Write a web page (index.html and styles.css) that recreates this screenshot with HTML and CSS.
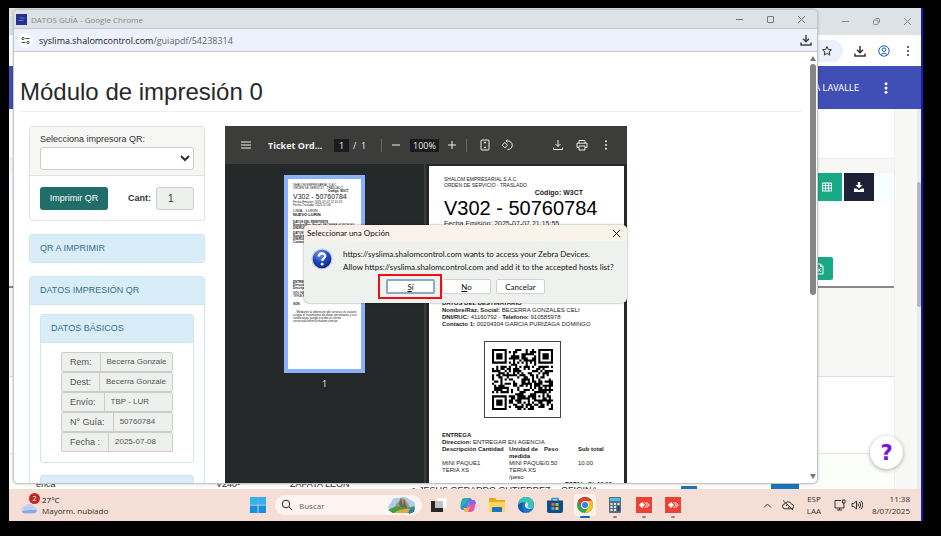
FILE: index.html
```html
<!DOCTYPE html>
<html lang="es">
<head>
<meta charset="utf-8">
<title>DATOS GUÍA</title>
<link rel="stylesheet" href="styles.css">
</head>
<body>
<div class="screen">
  <main class="desktop">
    <section class="browser">
      <div class="browser-title">
        <svg class="i9" viewBox="0 0 9 9"><path d="M1 4.5h7"/></svg>
        <svg class="i9" viewBox="0 0 9 9"><rect x="1.500" y="3" width="4.500" height="4.500" rx="1"/><path d="M3.500 1.500h3q1 0 1 1v3"/></svg>
        <svg class="i9" viewBox="0 0 9 9"><path d="M1 1l7 7M8 1l-7 7"/></svg>
      </div>
      <div class="browser-tools">
        <span class="star-pill"><svg class="i12" viewBox="0 0 12 12"><path d="M6 1.500l1.300 3 3.200.3-2.400 2.100.7 3.200L6 8.400l-2.800 1.700.7-3.200L1.500 4.800l3.200-.3z"/></svg></span>
        <svg class="i12" viewBox="0 0 12 12"><path class="thick" d="M6 1v6.500M3 4.800l3 3 3-3M1 8.500V11h10V8.500"/></svg>
        <svg class="i12 user" viewBox="0 0 12 12"><circle cx="6" cy="6" r="5.200"/><circle cx="6" cy="4.700" r="1.800"/><path d="M2.600 9.500q3.400-3 6.800 0"/></svg>
        <svg class="i12" viewBox="0 0 12 12"><g class="solid"><circle cx="6" cy="2" r="1"/><circle cx="6" cy="6" r="1"/><circle cx="6" cy="10" r="1"/></g></svg>
      </div>
      <div class="app-header">
        <span>A LAVALLE</span>
        <svg class="i12" viewBox="0 0 12 12"><g class="solid"><circle cx="6" cy="1.800" r="1.500"/><circle cx="6" cy="6" r="1.500"/><circle cx="6" cy="10.200" r="1.500"/></g></svg>
      </div>
      <div class="app-page">
        <div class="app-content">
          <div class="card-top"></div>
          <div class="card-tools">
            <button class="tool green" aria-label="Tabla"><svg class="i12" viewBox="0 0 12 12"><path d="M1.500 2h9v8h-9zM1.500 4.500h9M1.500 7.200h9M4.500 2v8M7.500 2v8"/></svg></button>
            <button class="tool dark" aria-label="Descargar"><svg class="i12" viewBox="0 0 12 12"><path class="fill" d="M4.800 1h2.400v3h2.300L6 7.500 2.500 4h2.300zM1 7.500h2.500L6 9.300l2.500-1.800H11V11H1z"/></svg></button>
          </div>
          <div class="card-excel"><button class="excel" aria-label="Excel"><svg class="i12" viewBox="0 0 12 12"><path d="M2.500 1h5L10 3.500V11H2.500zM7.500 1v2.500H10M4.500 5l3.500 4M8 5L4.500 9"/></svg></button></div>
          <div class="row-band"></div>
          <div class="row-white"></div>
          <div class="row-last">
            <span>erica</span><span>V240-</span><span>ZAPATA LEON</span><span class="low">● JESUS GERARDO GUTIERREZ</span><span class="low">OFICINA</span><i class="chip thin"></i><i class="chip"></i>
          </div>
        </div>
        <div class="app-scroll"><div class="app-thumb"></div></div>
      </div>
      <button class="help">?</button>
    </section>

    <section class="popup">
      <header class="popup-title">
        <svg class="fav" viewBox="0 0 11 11"><rect width="11" height="11" fill="#28318f" stroke="none"/><path d="M3.500 4h5M2.500 6.500h5" stroke="#5f78cf"/></svg>
        <span>DATOS GUÍA - Google Chrome</span>
        <div class="win-buttons">
          <svg class="i9" viewBox="0 0 9 9"><path d="M1 4.500h7"/></svg>
          <svg class="i9" viewBox="0 0 9 9"><rect x="1.500" y="1.500" width="6" height="6" rx=".5"/></svg>
          <svg class="i9" viewBox="0 0 9 9"><path d="M1 1l7 7M8 1l-7 7"/></svg>
        </div>
      </header>
      <div class="popup-url">
        <span class="tune"><svg class="i9" viewBox="0 0 9 9"><circle cx="2" cy="2.500" r="1.200"/><path d="M4.500 2.500h4M.5 6.500h4"/><circle cx="7" cy="6.500" r="1.200"/></svg></span>
        <span class="address"><b>syslima.shalomcontrol.com</b>/guiapdf/54238314</span>
        <svg class="i12" viewBox="0 0 12 12"><path class="thick" d="M6 1v6.500M3 4.800l3 3 3-3M1 8.500V11h10V8.500"/></svg>
      </div>
      <div class="popup-view">
        <div class="popup-page">
          <h1>Módulo de impresión 0</h1>
          <div class="columns">
            <form class="left">
              <div class="panel plain">
                <div class="panel-head">
                  <label for="printer">Selecciona impresora QR:</label>
                  <select id="printer"><option></option></select>
                </div>
                <div class="panel-print">
                  <button type="button" class="print">Imprimir QR</button>
                  <label for="cant">Cant:</label>
                  <input id="cant" value="1">
                </div>
              </div>
              <div class="panel info"><h2>QR A IMPRIMIR</h2></div>
              <div class="panel info">
                <h2>DATOS IMPRESIÓN QR</h2>
                <div class="panel-body">
                  <div class="panel info">
                    <h2>DATOS BÁSICOS</h2>
                    <div class="fields">
                      <div class="field"><label for="f1">Rem:</label><input id="f1" value="Becerra Gonzales"></div>
                      <div class="field"><label for="f2">Dest:</label><input id="f2" value="Becerra Gonzales"></div>
                      <div class="field"><label for="f3">Envío:</label><input id="f3" value="TBP - LUR"></div>
                      <div class="field"><label for="f4">N° Guía:</label><input id="f4" value="50760784"></div>
                      <div class="field"><label for="f5">Fecha :</label><input id="f5" value="2025-07-08"></div>
                    </div>
                  </div>
                  <div class="panel info"><h2></h2></div>
                </div>
              </div>
            </form>

            <div class="viewer">
              <div class="pdf-bar">
                <svg class="i12" viewBox="0 0 12 12"><path d="M1 3h10M1 6h10M1 9h10"/></svg>
                <strong>Ticket Ord...</strong>
                <span class="pdf-num">1</span><span class="pdf-of">/ &nbsp;1</span>
                <i class="sep"></i>
                <svg class="i12" viewBox="0 0 12 12"><path d="M2 6h8"/></svg>
                <span class="pdf-num zoom">100%</span>
                <svg class="i12" viewBox="0 0 12 12"><path d="M2 6h8M6 2v8"/></svg>
                <i class="sep"></i>
                <svg class="i12 fit" viewBox="0 0 12 12"><rect x="2" y="1" width="8" height="10" rx="1"/><path d="M6 3v1.500M6 9V7.500M5 4l1-1.200L7 4M5 8l1 1.200L7 8"/></svg>
                <svg class="i12 rot" viewBox="0 0 12 12"><path d="M3.800 3.500L6.500 6.200 3.800 9 1.100 6.200zM5 2h2a4.200 4.200 0 010 8.500H6.500M6.500.5L5 2l1.500 1.500"/></svg>
                <div class="pdf-right">
                  <svg class="i12" viewBox="0 0 12 12"><path d="M6 1v6.500M3.500 5L6 7.500 8.500 5M1.500 8.500v2h9v-2"/></svg>
                  <svg class="i12" viewBox="0 0 12 12"><path d="M3 4V1.500h6V4M3 8.500H1V4.200h10v4.300H9M3 7h6v4H3z"/></svg>
                  <svg class="i12" viewBox="0 0 12 12"><g class="solid"><circle cx="6" cy="2.300" r="1"/><circle cx="6" cy="6" r="1"/><circle cx="6" cy="9.700" r="1"/></g></svg>
                </div>
              </div>
              <div class="pdf-main">
                <div class="thumbs">
                  <div class="thumb">
                    <p>SHALOM EMPRESARIAL S.A.C<br>ORDEN DE SERVICIO - TRASLADO</p>
                    <p class="t-code"><b>Código: W3CT</b></p>
                    <p class="t-num">V302 - 50760784</p>
                    <p>Fecha Emisión: 2025-07-07 21:15:55<br>Fecha Traslado: 2025-07-08</p>
                    <p class="t-place">LIMA - LURIN<br><b>NUEVO LURIN</b></p>
                    <p class="t-sender"><b>DATOS DEL REMITENTE<br>Nombre/Raz. Social:</b> BECERRA GONZALES<br><b>DNI/RUC:</b> 41160792</p>
                    <p class="t-dest"><b>DATOS<br>Nombre<br>DNI/RUC<br>Contact</b></p>
                    <p class="t-ent"><b>ENTREGA</b><br><b>Direccion:</b><br><b>Descripción</b></p>
                    <p>MINI PAQUE<br>TERIA XS</p>
                    <p class="t-pay"><b>SON:</b></p>
                    <p class="t-terms">&nbsp; - Mediante la obtención del servicio, el usuario<br>acepta el tratamiento de datos personales y sus<br>condiciones puede escribir al correo<br>servicioalcliente@shalom.com.pe</p>
                  </div>
                  <span>1</span>
                </div>
                <article class="sheet">
                  <p class="s-org">SHALOM EMPRESARIAL S.A.C<br>ORDEN DE SERVICIO - TRASLADO</p>
                  <p class="s-code">Código: W3CT</p>
                  <p class="s-num">V302 - 50760784</p>
                  <p class="s-date">Fecha Emisión: 2025-07-07 21:15:55</p>
                  <div class="s-dest"><b>DATOS DEL DESTINATARIO</b><br><b>Nombre/Raz. Social:</b> BECERRA GONZALES CELI<br><b>DNI/RUC:</b> 41160792 - <b>Telefono:</b> 910585978<br><b>Contacto 1:</b> 00204304 GARCIA PURIZAGA DOMINGO</div>
                  <div class="qr"><svg id="qr" viewBox="0 0 29 29"></svg></div>
                  <div class="s-ent"><b>ENTREGA</b><br><b>Direccion:</b> ENTREGAR EN AGENCIA</div>
                  <table>
                    <tr><th>Descripción Cantidad</th><th>Unidad de medida</th><th>Peso</th><th>Sub total</th></tr>
                    <tr><td>MINI PAQUE1<br>TERIA XS</td><td>MINI PAQUE<br>TERIA XS<br>/peso</td><td>/0.50</td><td>10.00</td></tr>
                  </table>
                  <p class="s-total">TOTAL: S/. 10.00</p>
                </article>
              </div>
            </div>
          </div>
        </div>
        <div class="scroll"><i class="up"></i><div class="scroll-thumb"></div><i class="down"></i></div>
      </div>
    </section>

    <section class="dialog" role="dialog" aria-label="Seleccionar una Opción">
      <header><span>Seleccionar una Opción</span><svg class="i9" viewBox="0 0 9 9"><path d="M1 1l7 7M8 1l-7 7"/></svg></header>
      <div class="dialog-text">
        <svg class="question" viewBox="0 0 22 22"><defs><radialGradient id="ball" cx=".4" cy=".25" r=".8"><stop offset="0" stop-color="#7b9cf0"/><stop offset=".5" stop-color="#2549c4"/><stop offset="1" stop-color="#0c1f78"/></radialGradient></defs><circle cx="11" cy="11" r="10.500" fill="#c9cfd6"/><circle cx="11" cy="11" r="9.300" fill="url(#ball)"/><path d="M7.800 8.500c0-4 6.400-4 6.400-.4 0 2.300-3 2.400-3 5" fill="none" stroke="#fff" stroke-width="2.200"/><circle cx="11.200" cy="16.200" r="1.400" fill="#fff"/></svg>
        <p>https://syslima.shalomcontrol.com wants to access your Zebra Devices.<br>Allow https://syslima.shalomcontrol.com and add it to the accepted hosts list?</p>
      </div>
      <div class="dialog-buttons">
        <div class="mark"><button class="yes"><u>S</u>í</button></div>
        <button><u>N</u>o</button>
        <button>Cancelar</button>
      </div>
    </section>
  </main>

  <footer class="taskbar">
    <div class="weather">
      <div class="cloud"><svg viewBox="0 0 18 12"><path d="M4 11.500a3.500 3.500 0 01.3-7A5 5 0 0113.500 5a3.300 3.300 0 01.8 6.500z" fill="#b9cff5"/><path d="M1 9.500q8-2 16-1-.6 3-3 3H4q-2.500 0-3-2z" fill="#86a8e8"/></svg><span class="badge">2</span></div>
      <p><b>27°C</b><br>Mayorm. nublado</p>
    </div>
    <div class="apps">
      <svg class="app" viewBox="0 0 16 16"><path d="M0 0h7.600v7.600H0zM8.400 0H16v7.600H8.400zM0 8.400h7.600V16H0zM8.400 8.400H16V16H8.400z" fill="#1590e0"/><path d="M0 0h7.600v7.600H0zM8.400 0H16v7.600H8.400z" fill="#35b0ee"/></svg>
      <label class="search">
        <svg class="i12" viewBox="0 0 12 12"><circle cx="5" cy="5" r="3.800"/><path d="M8 8l3.200 3.200"/></svg>
        <input placeholder="Buscar" aria-label="Buscar">
        <svg class="scene" viewBox="0 0 30 18"><path d="M3 15Q-1 10 4 7 5 1 12 2q7-3 11 2 6 1 5 8-1 5-6 5H6z" fill="#a9cdf2"/><path d="M6 13l5-7 3-4 4 1 3 5 3 5z" fill="#a5957c"/><path d="M12 8l2-6 2 8 1-7 3 9-5 2z" fill="#6f6553"/><path d="M1 14q8-5 14-3t12-1q1 6-4 7H6z" fill="#4c9a3c"/><path d="M7 17q7-5 18-4l-5 4z" fill="#d9ac52"/><path d="M22 14l6-3-1 5-5 2z" fill="#2f78b8"/></svg>
      </label>
      <svg class="app" viewBox="0 0 16 16"><rect x="6" y="1" width="10" height="10" fill="#fff"/><rect y="4" width="12" height="11" fill="#262626"/><rect x="4" y="4" width="8" height="7" fill="#c3c3c3"/></svg>
      <svg class="app" viewBox="0 0 16 16"><path d="M5 1h5q1.500 0 2 2l.5 2H9L7 11q-.7 2-2.500 2H3Q0 13 .5 9l1-5Q2.500 1 5 1z" fill="#2b8fe8"/><path d="M1.500 4Q2.500 1 5 1h3L5.500 7 .6 9z" fill="#23b7a0"/><path d="M11 3h2q3 0 2.500 4l-1 5q-1 3-3.500 3H6q-1.500 0-2-2l-.5-2H7l2-6q.7-2 2-2z" fill="#e15bb2"/><path d="M3.500 11H7l3-1-2 5H6q-1.500 0-2-2z" fill="#f6b636"/><path d="M11 3h2q3 0 2.500 4l-5 1L9 5z" fill="#8c62e8"/></svg>
      <svg class="app" viewBox="0 0 16 16"><path d="M0 2q0-1 1-1h5l2 2h7q1 0 1 1v10H0z" fill="#e9a722"/><path d="M0 5h16v9q0 1-1 1H1q-1 0-1-1z" fill="#ffd45a"/><path d="M3 11q0-1 1-1h8q1 0 1 1v4H3z" fill="#1776c4"/></svg>
      <svg class="app" viewBox="0 0 16 16"><circle cx="8" cy="8" r="8" fill="#1677cf"/><path d="M0 8a8 8 0 0116 0q0 3.500-4 3.500-3 0-2.300-2Q10 5.500 6 5.500 2 5.300 0 8z" fill="#37c5b5"/><path d="M9 5q1 1 1 3-1.500 3 3 3.500l2.500-1.500Q14 12.500 11 12 6 11 7 7z" fill="#f6dfd6"/><path d="M0 8q2-3 6-2.500Q2 9 6.500 15.800 0 14.500 0 8z" fill="#1657a8"/></svg>
      <svg class="app" viewBox="0 0 16 16"><path d="M5 4V1.500h6V4" fill="none" stroke="#1a9be0" stroke-width="1.500"/><path d="M0 3.500h16V14q0 2-2 2H2q-2 0-2-2z" fill="#134b88"/><path d="M4.500 6h3v3h-3z" fill="#f05a2a"/><path d="M8.500 6h3v3h-3z" fill="#8cc53f"/><path d="M4.500 10h3v3h-3z" fill="#32a9e8"/><path d="M8.500 10h3v3h-3z" fill="#fdb92c"/></svg>
      <span class="running active"><svg class="app" viewBox="0 0 16 16"><circle cx="8" cy="8" r="8" fill="#34a350"/><path d="M1.100 4A8 8 0 0114.900 4H8a4 4 0 00-3.500 6z" fill="#e33b2e"/><path d="M14.900 4A8 8 0 018 16l3.500-6A4 4 0 008 4z" fill="#fbc116"/><circle cx="8" cy="8" r="3.900" fill="#fff"/><circle cx="8" cy="8" r="3" fill="#3b7de8"/></svg></span>
      <span class="running"><svg class="app" viewBox="0 0 16 16"><rect x="2" width="12" height="16" rx="1" fill="#5e6c7b"/><path d="M3 1h10v3H3z" fill="#42c3ee"/><path d="M3.500 6h2v2h-2zM7 6h2v2H7zM10.500 6h2v2h-2zM3.500 9h2v2h-2zM7 9h2v2H7zM3.500 12h2v2h-2zM7 12h2v2H7z" fill="#e4e9ee"/><path d="M10.500 9h2v5h-2z" fill="#173b78"/></svg></span>
      <span class="running"><svg class="app" viewBox="0 0 16 16"><rect width="16" height="16" fill="#ee4136"/><path d="M6 5l3 3-3 3-3-3z" fill="#fff"/><path d="M8.500 5.200L11.300 8l-2.800 2.800M10.500 5.200L13.300 8l-2.800 2.800" fill="none" stroke="#fff"/></svg></span>
      <span class="running"><svg class="app" viewBox="0 0 16 16"><rect width="16" height="16" fill="#ee4136"/><path d="M6 5l3 3-3 3-3-3z" fill="#fff"/><path d="M8.500 5.200L11.300 8l-2.800 2.800M10.500 5.200L13.300 8l-2.800 2.800" fill="none" stroke="#fff"/></svg></span>
    </div>
    <div class="tray">
      <svg class="i9" viewBox="0 0 9 9"><path d="M1 6.500L4.500 3 8 6.500"/></svg>
      <svg class="i12" viewBox="0 0 12 12"><path d="M3 9.800a2.500 2.500 0 010-5 3.500 3.500 0 016.500.4 2.300 2.300 0 01-.3 4.600zM1 1.500l10 9.500M4 7l2-2M6 9l2-2"/></svg>
      <span class="lang">ESP<br>LAA</span>
      <svg class="i12" viewBox="0 0 12 12"><path d="M7 1.500H1v7.500h9V6M3 11h5M5.500 9v2M8.500 1h2.500v3H8.500zM9.800 4v2"/></svg>
      <svg class="i12" viewBox="0 0 12 12"><path d="M1 4.500h1.800L5.500 2v8L2.800 7.500H1zM7 4.500q1.200 1.500 0 3M8.500 3q2.400 3 0 6M10 1.800q3.600 4.200 0 8.400"/></svg>
      <span class="clock">11:38<br>8/07/2025</span>
    </div>
  </footer>
</div>
<script src="qr.js"></script>
</body>
</html>
```
FILE: styles.css
```css
* { box-sizing: border-box; }
body { margin: 0; background: #000; font-family: "Open Sans", "Noto Sans", sans-serif; font-size: 8px; color: #333; }
h1, h2, p { margin: 0; font-weight: 400; }
button, input, select { font: inherit; color: inherit; margin: 0; padding: 0; border: 0; min-width: 0; }
svg { display: block; flex: none; fill: none; stroke: currentColor; }
.i9 { width: 9px; height: 9px; }
.i12 { width: 12px; height: 12px; }
.thick { stroke-width: 1.5px; }
.solid, .fill { fill: currentColor; stroke: none; }
.app, .cloud svg, .scene, .question { stroke: none; }

.screen { display: flex; flex-direction: column; height: 100vh; border: solid #000; border-width: 8px 18px 15px 9px; }
.desktop { position: relative; flex: 1; min-height: 0; overflow: hidden; }

/* Browser behind the popup */
.browser { display: flex; flex-direction: column; height: 100%; background: #fff; border-right: 2px solid #1a15b5; }
.browser-title { display: flex; justify-content: flex-end; align-items: center; gap: 22px; height: 27px; padding-right: 9px; background: #dce2e5; color: #888; }
.browser-tools { display: flex; justify-content: flex-end; align-items: center; gap: 12px; height: 31px; padding-right: 7px; }
.star-pill { display: flex; justify-content: flex-end; width: 40px; padding: 5px 10px; margin-right: -1px; border-radius: 11px; background: #eaf0fc; }
.user { color: #1a5fc0; }
.app-header { display: flex; justify-content: flex-end; align-items: center; gap: 21px; height: 43px; padding-right: 29px; background: #3f4fb5; color: #fff; font-size: 9px; font-family: Roboto, sans-serif; }
.app-page { display: flex; flex: 1; min-height: 0; background: #f7f8f5; }
.app-content { display: flex; flex-direction: column; flex: 1; margin-right: 22px; min-width: 0; border-right: 1px solid #eef0f0; }
.card-top { height: 50px; background: #fff; border-bottom: 1px solid #e9eaea; margin-bottom: 14px; }
.card-tools { display: flex; justify-content: flex-end; gap: 2px; height: 28px; padding-right: 20px; background: #f8fdff; }
.tool { display: flex; align-items: center; justify-content: center; width: 30px; color: #fff; }
.green, .excel { background: #18aa84; }
.dark { background: #1d2135; }
.card-excel { display: flex; justify-content: flex-end; height: 87px; padding: 56px 61px 8px 0; background: #fff; border-bottom: 2px solid #888; }
.excel { display: flex; align-items: center; justify-content: center; width: 28px; height: 23px; border-radius: 2px; color: #fff; }
.row-band { height: 89px; border-bottom: 1px solid #ddd; }
.row-white { height: 77px; background: #fff; border-bottom: 1px solid #e2e4e2; }
.row-last { display: grid; grid-template-columns: 180px 74px 121px 150px 120px 90px 28px; flex: 1; align-items: end; padding-left: 27px; overflow: hidden; background: #fbfdf9; font: 9px/10px "Liberation Sans", sans-serif; white-space: nowrap; }
.low { margin-bottom: -6px; }
.chip { width: 28px; height: 6px; background: #1b75bb; }
.chip.thin { width: 16px; height: 3px; }
.app-scroll { width: 4px; padding-top: 73px; background: #eceeed; }
.app-thumb { height: 125px; background: #b5b8b8; border-radius: 2px; }
.help { position: absolute; right: 20px; bottom: 20px; width: 33px; height: 33px; border-radius: 50%; background: #fff; color: #7a0fe8; font: bold 21px "DejaVu Sans", sans-serif; box-shadow: 0 1px 4px #0005; }

/* Popup window */
.popup { position: absolute; top: 1px; right: 105px; bottom: 5px; left: 4px; display: flex; flex-direction: column; overflow: hidden; background: #fff; border: 1px solid #c3c6c8; border-radius: 5px; box-shadow: 0 0 3px #0003; }
.popup-title { display: flex; align-items: center; gap: 4px; height: 18px; padding: 0 11px 0 2px; background: #dce2e5; color: #888; }
.popup-title span { flex: 1; }
.fav { width: 11px; height: 11px; }
.win-buttons { display: flex; gap: 22px; color: #777; }
.popup-url { display: flex; align-items: center; gap: 6px; height: 24px; padding: 0 5px 0 4px; border: solid #c4c6ca; border-width: 1px 0; background: #edf1fd; color: #444; }
.tune { display: flex; padding: 3px; border-radius: 50%; background: #fff; }
.address { flex: 1; color: #666; font-size: 9px; }
.address b { color: #222; font-weight: 400; }
.popup-view { display: flex; flex: 1; min-height: 0; }
.popup-page { flex: 1; min-width: 0; padding: 26px 6px 0; overflow: hidden; font-family: "Liberation Sans", Arial, sans-serif; font-size: 9px; }
h1 { padding-bottom: 5px; margin-bottom: 14px; border-bottom: 1px solid #eee; font-size: 24px; line-height: 28px; color: #282828; }
.scroll { display: flex; flex-direction: column; align-items: center; width: 9px; padding: 4px 0; }
.up, .down { border: 3px solid transparent; border-top-width: 0; border-bottom: 5px solid #777; }
.down { border-width: 5px 3px 0; border-top-color: #777; margin-top: auto; }
.scroll-thumb { width: 6px; height: 231px; margin-top: 3px; border-radius: 3px; background: #858585; }

.columns { display: grid; grid-template-columns: 176fr 402fr 155fr; gap: 20px; align-items: start; padding-left: 9px; }
.left { display: grid; gap: 13px; min-width: 0; }
.panel { border: 1px solid #e2e3e1; border-radius: 3px; overflow: hidden; }
.panel-head { display: grid; gap: 2px; height: 49px; padding: 7px 10px 6px; border-bottom: 1px solid #e2e3e1; background: #f6f7f4; line-height: 11px; }
select { width: 100%; height: 23px; border: 1px solid #ccc; border-radius: 3px; background: #fff; }
.panel-print { display: flex; align-items: center; height: 44px; padding: 0 10px; }
.print { width: 68px; height: 23px; border-radius: 3px; background: #216d69; color: #fff; }
.panel-print label { margin: 0 5px 0 auto; font-weight: 700; }
.panel-print input { width: 38px; height: 23px; padding-left: 11px; border: 1px solid #ccc; border-radius: 3px; background: #eef0ee; font-size: 10px; }
.info { border-color: #cbe8ee; }
.info h2 { height: 27px; padding-left: 10px; background: #d8edf8; color: #37718e; font-size: 9px; line-height: 27px; }
.panel-body { display: grid; gap: 12px; padding: 9px 10px; border-top: 1px solid #cbe8ee; }
.fields { padding: 9px 20px 10px; border-top: 1px solid #cbe8ee; }
.field { display: flex; height: 20px; border: 1px solid #ccc; border-radius: 2px; background: #eef0ee; color: #555; line-height: 18px; }
.field label { padding: 0 8px; border-right: 1px solid #ccc; white-space: nowrap; }
.field input { flex: 1; margin: 0 6px; background: none; font-size: 8px; }

/* PDF viewer */
.viewer { background: #252829; min-width: 0; }
.pdf-bar { display: flex; align-items: center; height: 38px; padding: 0 15px; background: #3c3c3b; color: #eee; font-family: "Open Sans", sans-serif; font-size: 9px; white-space: nowrap; }
.pdf-bar strong { width: 66px; margin-left: 16px; }
.pdf-num { width: 15px; background: #191b1c; text-align: center; line-height: 13px; }
.pdf-of { width: 32px; padding-left: 4px; }
.sep { width: 1px; height: 13px; margin: 0 8px 0 0; background: #666; }
.zoom { width: 29px; margin: 0 7px 0 8px; }
.zoom + svg { margin-right: 8px; }
.fit { margin: 0 10px 0 4px; }
.pdf-right { display: flex; gap: 12px; margin-left: auto; }
.pdf-main { display: grid; grid-template-columns: 1fr 1fr; height: 400px; }
.thumbs { display: flex; flex-direction: column; align-items: center; gap: 4px; padding-top: 11px; border-right: 2px solid #3c3c3b; color: #eee; font-family: "Open Sans", sans-serif; }
.thumb { width: 81px; height: 198px; padding: 5px; border: 4px solid #8ab0f8; background: #fff; color: #222; font: 3px/4px "Liberation Sans", sans-serif; white-space: nowrap; overflow: hidden; }
.thumb p { line-height: 3px; }
.thumb .t-code { padding-left: 35px; }
.thumb .t-num { font-size: 7px; line-height: 8px; }
.thumb .t-place { margin-top: 2px; font-size: 4px; line-height: 4px; }
.thumb .t-sender { margin-top: 4px; }
.thumb .t-dest { margin-top: 2px; }
.thumb .t-ent { margin-top: 37px; margin-bottom: 2px; }
.thumb .t-pay { margin-top: 5px; }
.thumb .t-terms { margin-top: 5px; }
.sheet { margin: 2px 3px 0; padding: 10px 12px 0 13px; background: #fff; color: #222; font-size: 6px; line-height: 7px; }
.s-org { padding-left: 2px; font-size: 5px; line-height: 6px; }
.s-code { padding-right: 29px; font-size: 7px; font-weight: 700; line-height: 9px; text-align: right; }
.s-num { padding-left: 2px; font-size: 20px; line-height: 23px; color: #000; white-space: nowrap; }
.s-date { padding-left: 2px; font-size: 7px; line-height: 7px; white-space: nowrap; }
.s-dest { margin-top: 73px; white-space: nowrap; }
.qr { width: 77px; margin: 13px 0 14px 42px; padding: 7px; border: 1px solid #444; }
.qr svg { width: 100%; fill: #000; stroke: none; }
.sheet table { width: 100%; table-layout: fixed; border-collapse: collapse; }
.sheet th, .sheet td { padding: 0; text-align: left; vertical-align: top; white-space: nowrap; }
.sheet th:nth-child(1) { width: 67px; }
.sheet th:nth-child(2) { width: 35px; white-space: normal; }
.sheet th:nth-child(3) { width: 34px; }
.s-total { text-align: right; font-weight: 700; }

/* Message box */
.dialog { position: absolute; top: 217px; left: 295px; width: 323px; border-radius: 5px; background: #eff1ee; box-shadow: 0 0 2px #0008; color: #111; font-family: Lato, sans-serif; overflow: hidden; }
.dialog header { display: flex; align-items: center; justify-content: space-between; height: 16px; padding: 0 6px 0 3px; background: linear-gradient(90deg, #fceeea, #f8f5e8); }
.dialog-text { display: flex; gap: 10px; padding: 7px 7px 0; }
.dialog-text p { line-height: 13px; white-space: nowrap; }
.question { width: 22px; height: 22px; }
.dialog-buttons { display: flex; align-items: center; gap: 5px; padding-left: 74px; margin-bottom: 4px; }
.dialog-buttons button { width: 49px; height: 15px; border: 1px solid #d0d2d2; border-radius: 2px; background: #fdfdfd; }
.mark { padding: 3px 5px 3px 6px; border: 2px solid #e8111a; margin-right: -5px; }
.dialog-buttons .yes { display: block; border: 2px solid #8babc0; line-height: 10px; }

/* Taskbar */
.taskbar { display: flex; align-items: center; height: 32px; padding: 0 11px 0 12px; background: #f5ded5; border-right: 2px solid #1a15b5; color: #333; }
.weather, .tray { display: flex; flex: 1; align-items: center; }
.weather { gap: 4px; line-height: 11px; }
.weather b { font-weight: 400; color: #111; }
.cloud { position: relative; padding-top: 5px; }
.cloud svg { width: 17px; height: 12px; }
.badge { position: absolute; top: -4px; right: -2px; width: 11px; height: 11px; border-radius: 50%; background: #c22a20; color: #fff; font-size: 7px; line-height: 11px; text-align: center; }
.apps { display: flex; align-items: center; gap: 13px; }
.app { width: 16px; height: 16px; }
.search { display: flex; align-items: center; gap: 6px; width: 147px; height: 20px; margin: 0 -4px; padding: 0 4px 0 6px; border-radius: 10px; background: #fdf3f1; color: #222; }
.search input { flex: 1; background: none; }
.search input::placeholder { color: #666; opacity: 1; }
.scene { width: 32px; height: 18px; }
.running { position: relative; }
.running::after { content: ""; position: absolute; bottom: -5px; left: 6px; width: 4px; height: 2px; border-radius: 1px; background: #888; }
.active { padding: 3px; margin: 0 -2px; border-radius: 3px; background: #fbf1ed; }
.active::after { left: 6px; bottom: -2px; width: 10px; background: #1766b8; }
.tray { justify-content: flex-end; gap: 5px; line-height: 12px; }
.lang { margin: 0 8px; text-align: center; }
.clock { margin-left: 4px; text-align: right; }
.tray .i9 { margin-right: 5px; }
```
FILE: qr.js
```javascript
// Fills the QR symbol: finder, alignment and timing patterns, then data modules.
const SIZE = 29;
let seed = 50760784;
const random = () => (seed = (seed * 48271) % 2147483647) / 2147483647;

function ring(x, y, cx, cy, reach) {
  const d = Math.max(Math.abs(x - cx), Math.abs(y - cy));
  return d > reach ? null : d;
}

function isDark(x, y) {
  for (const [cx, cy] of [[3, 3], [25, 3], [3, 25]]) {
    const d = ring(x, y, cx, cy, 4);
    if (d !== null) return d !== 2 && d !== 4;
  }
  const a = ring(x, y, 22, 22, 2);
  if (a !== null) return a !== 1;
  if (x === 6 || y === 6) return (x + y) % 2 === 0;
  return random() < 0.56;
}

let d = "";
for (let y = 0; y < SIZE; y++)
  for (let x = 0; x < SIZE; x++)
    if (isDark(x, y)) d += `M${x} ${y}h1v1h-1z`;
document.getElementById("qr").innerHTML = `<path d="${d}"/>`;
```
